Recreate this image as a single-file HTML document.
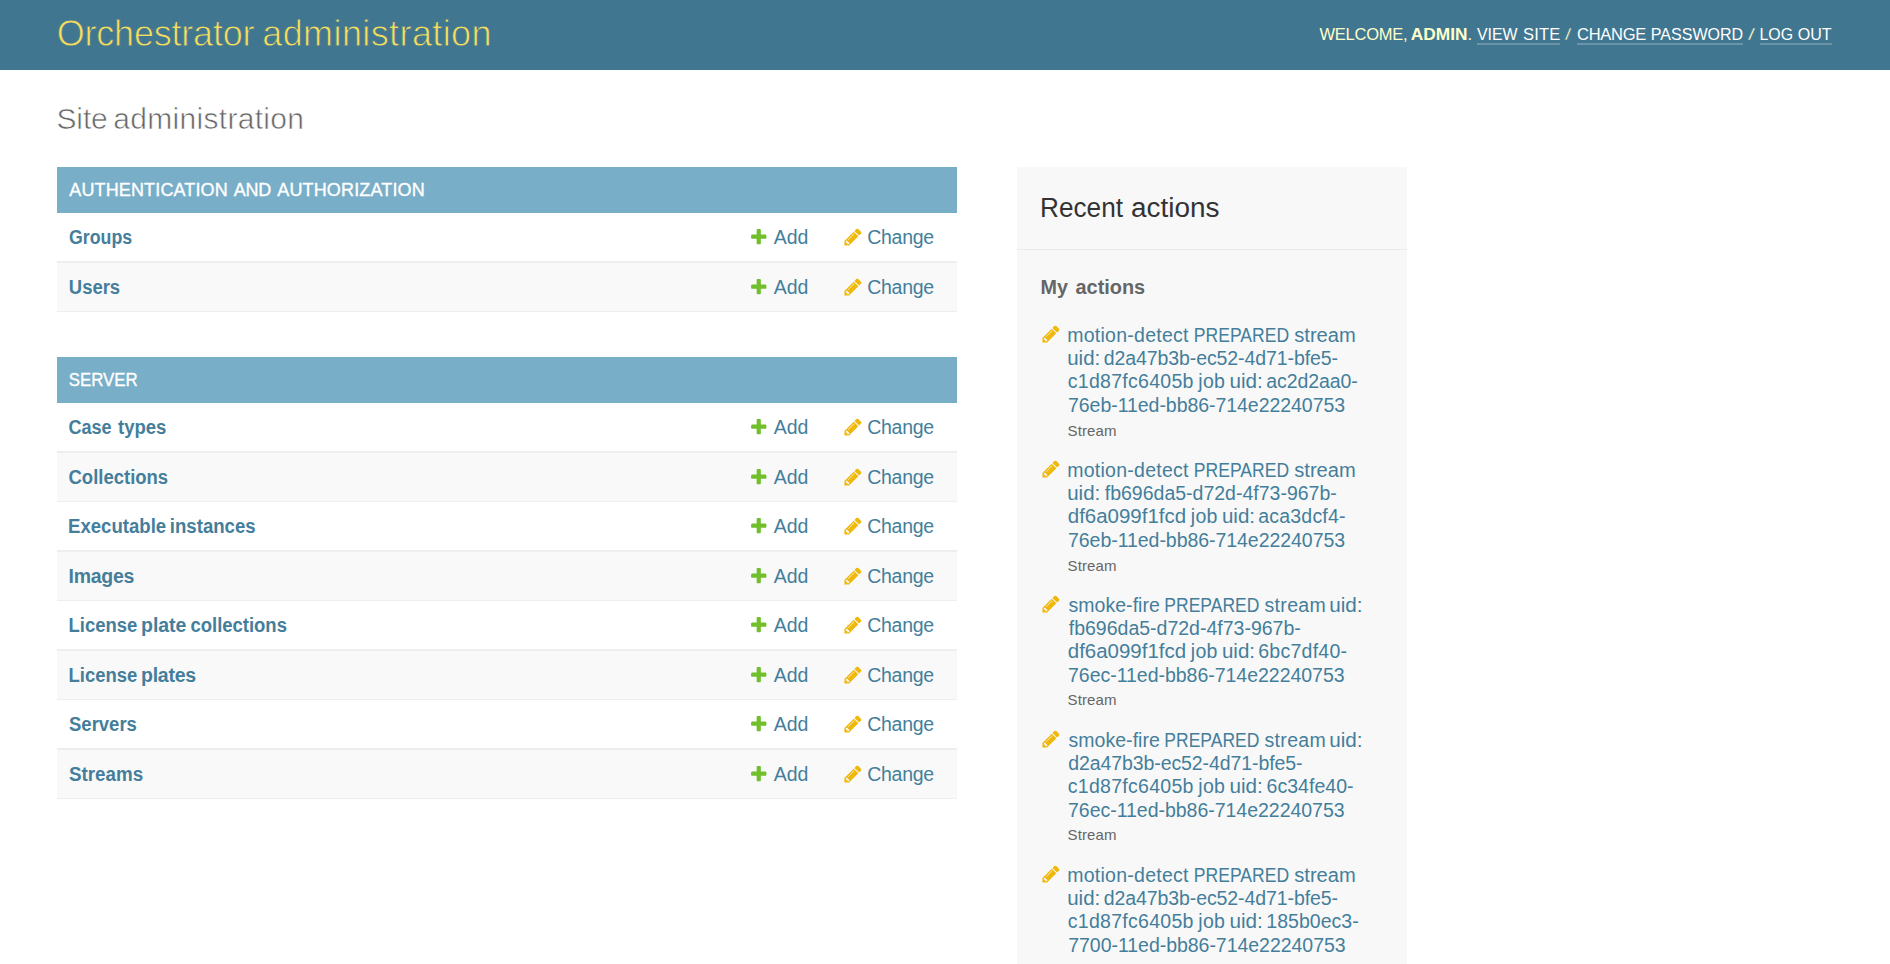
<!DOCTYPE html>
<html lang="en"><head><meta charset="utf-8"><title>Site administration | Orchestrator administration</title>
<style>
html,body{margin:0;padding:0;background:#fff;}
body{width:1890px;height:964px;overflow:hidden;position:relative;font-family:"Liberation Sans",sans-serif;}
h1,h2,h3,ul,li{margin:0;padding:0;font-weight:normal;font-size:inherit;list-style:none;}
a{color:#447e9b;text-decoration:none;}
.t{position:absolute;white-space:nowrap;display:block;transform-origin:0 50%;}
.b{font-weight:bold;}
.f36{font-size:36px;line-height:43px;}
.f30{font-size:30px;line-height:36px;}
.f27{font-size:27px;line-height:32px;}
.f21{font-size:21px;line-height:25px;}
.f19{font-size:19.5px;line-height:23px;}
.f18{font-size:18px;line-height:22px;text-transform:uppercase;}
.f16{font-size:16.5px;line-height:20px;text-transform:uppercase;}
.f15{font-size:15px;line-height:18px;}
.q{color:#666;}
.sl{-webkit-text-stroke:0.4px #417690;}
#header{position:absolute;left:0;top:0;width:1890px;height:70px;background:#417690;color:#ffc;}
#branding h1{color:#f5dd5d;-webkit-text-stroke:0.8px #417690;}
#user-tools a{position:absolute;top:24px;height:19px;border-bottom:2px solid rgba(255,255,255,0.22);color:#fff;display:block;}
#content>h1{color:#666;-webkit-text-stroke:0.6px #fff;}
.module{position:absolute;left:57px;width:900px;}
.caption{position:absolute;left:0;top:0;width:900px;height:46px;background:#79aec8;color:#fff;-webkit-text-stroke:0.35px #fff;}
.row{position:absolute;left:0;width:900px;height:49.5px;}
.row.r2{background:#f9f9f9;}
.row .bd{position:absolute;left:0;bottom:0;width:900px;height:1.5px;background:#eee;}
.ic{position:absolute;width:19.5px;height:19.5px;display:block;}
.pn{width:20px;height:20px;}
#side{position:absolute;left:1017px;top:167px;width:390px;height:797px;background:#f8f8f8;}
#side h2{color:#333;}
#side h3{color:#666;}
#side .hr{position:absolute;left:0;top:82px;width:390px;height:1px;background:#eaeaea;}
</style></head>
<body class="dashboard">
<div id="header">
<div id="branding"><h1><span class="t f36" style="left:56.75px;top:12px;letter-spacing:-0.209px;">Orchestrator</span> <span class="t f36" style="left:262.25px;top:12px;letter-spacing:0.399px;">administration</span></h1></div>
<div id="user-tools">
<span class="t f16" style="left:1319.50px;top:24px;letter-spacing:-0.249px;">Welcome,</span> <strong><span class="t f16 b" style="left:1410px;top:24px;transform:translateX(0.75px) scaleX(1.0488);">admin</span></strong><span class="t f16" style="left:1467.60px;top:24px;">.</span>
<a style="left:1476.5px;width:83.8px"><span class="t f16" style="left:-1px;top:0px;transform:translateX(1.00px) scaleX(0.9629);">View</span> <span class="t f16" style="left:46.50px;top:0px;letter-spacing:0.216px;">site</span></a> <span class="t f16 sl" style="left:1564px;top:24px;transform:translateX(0.75px) scaleX(1.4542);">/</span> <a style="left:1577px;width:166px"><span class="t f16" style="left:-0.00px;top:0px;letter-spacing:-0.261px;">Change</span> <span class="t f16" style="left:73px;top:0px;transform:translateX(0.78px) scaleX(0.9723);">password</span></a> <span class="t f16 sl" style="left:1747px;top:24px;transform:translateX(0.75px) scaleX(1.6265);">/</span> <a style="left:1760px;width:72px"><span class="t f16" style="left:-1px;top:0px;transform:translateX(0.54px) scaleX(0.9623);">Log</span> <span class="t f16" style="left:37px;top:0px;transform:translateX(0.75px) scaleX(0.9722);">out</span></a>
</div></div>
<div id="content">
<h1><span class="t f30" style="left:56.50px;top:101px;letter-spacing:-0.148px;">Site</span> <span class="t f30" style="left:113.25px;top:101px;letter-spacing:0.303px;">administration</span></h1>
<div id="content-main">
<div class="module" style="top:167px;height:145px">
<h2 class="caption"><span class="t f18" style="left:12.25px;top:12px;letter-spacing:0.141px;">Authentication</span> <span class="t f18" style="left:176.75px;top:12px;letter-spacing:-0.250px;">and</span> <span class="t f18" style="left:220.25px;top:12px;letter-spacing:0.153px;">Authorization</span></h2>
<div class="row" style="top:46px">
<a><span class="t f19 b" style="left:11px;top:13px;transform:translateX(1.00px) scaleX(0.9107);">Groups</span></a>
<svg class="ic" style="left:692px;top:14.25px" viewBox="0 0 1792 1792"><path fill="#70bf2b" d="M1600 796v192q0 40-28 68t-68 28h-416v416q0 40-28 68t-68 28h-192q-40 0-68-28t-28-68v-416h-416q-40 0-68-28t-28-68v-192q0-40 28-68t68-28h416v-416q0-40 28-68t68-28h192q40 0 68 28t28 68v416h416q40 0 68 28t28 68z"/></svg><a><span class="t f19" style="left:716.75px;top:13px;letter-spacing:-0.045px;">Add</span></a>
<svg class="ic pn" style="left:785.55px;top:14.2px" viewBox="0 0 1792 1792"><path fill="#efb80b" d="M491 1536l91-91-235-235-91 91v107h128v128h107zm523-928q0-22-22-22-10 0-17 7l-542 542q-7 7-7 17 0 22 22 22 10 0 17-7l542-542q7-7 7-17zm-54-192l416 416-832 832h-416v-416zm683 96q0 53-37 90l-166 166-416-416 166-165q36-38 90-38 53 0 91 38l235 234q37 39 37 91z"/></svg><a><span class="t f19" style="left:810.25px;top:13px;letter-spacing:-0.289px;">Change</span></a>
<div class="bd"></div></div>
<div class="row r2" style="top:95.5px">
<a><span class="t f19 b" style="left:11px;top:13.5px;transform:translateX(0.80px) scaleX(0.9469);">Users</span></a>
<svg class="ic" style="left:692px;top:14.25px" viewBox="0 0 1792 1792"><path fill="#70bf2b" d="M1600 796v192q0 40-28 68t-68 28h-416v416q0 40-28 68t-68 28h-192q-40 0-68-28t-28-68v-416h-416q-40 0-68-28t-28-68v-192q0-40 28-68t68-28h416v-416q0-40 28-68t68-28h192q40 0 68 28t28 68v416h416q40 0 68 28t28 68z"/></svg><a><span class="t f19" style="left:716.75px;top:13.5px;letter-spacing:-0.045px;">Add</span></a>
<svg class="ic pn" style="left:785.55px;top:14.2px" viewBox="0 0 1792 1792"><path fill="#efb80b" d="M491 1536l91-91-235-235-91 91v107h128v128h107zm523-928q0-22-22-22-10 0-17 7l-542 542q-7 7-7 17 0 22 22 22 10 0 17-7l542-542q7-7 7-17zm-54-192l416 416-832 832h-416v-416zm683 96q0 53-37 90l-166 166-416-416 166-165q36-38 90-38 53 0 91 38l235 234q37 39 37 91z"/></svg><a><span class="t f19" style="left:810.25px;top:13.5px;letter-spacing:-0.289px;">Change</span></a>
<div class="bd"></div></div>
</div>
<div class="module" style="top:357px;height:442px">
<h2 class="caption"><span class="t f18" style="left:11px;top:12px;transform:translateX(0.75px) scaleX(0.9365);">Server</span></h2>
<div class="row" style="top:46px">
<a><span class="t f19 b" style="left:11px;top:13px;transform:translateX(0.50px) scaleX(0.9259);">Case</span> <span class="t f19 b" style="left:61px;top:13px;transform:translateX(0.00px) scaleX(0.9498);">types</span></a>
<svg class="ic" style="left:692px;top:14.25px" viewBox="0 0 1792 1792"><path fill="#70bf2b" d="M1600 796v192q0 40-28 68t-68 28h-416v416q0 40-28 68t-68 28h-192q-40 0-68-28t-28-68v-416h-416q-40 0-68-28t-28-68v-192q0-40 28-68t68-28h416v-416q0-40 28-68t68-28h192q40 0 68 28t28 68v416h416q40 0 68 28t28 68z"/></svg><a><span class="t f19" style="left:716.75px;top:13px;letter-spacing:-0.045px;">Add</span></a>
<svg class="ic pn" style="left:785.55px;top:14.2px" viewBox="0 0 1792 1792"><path fill="#efb80b" d="M491 1536l91-91-235-235-91 91v107h128v128h107zm523-928q0-22-22-22-10 0-17 7l-542 542q-7 7-7 17 0 22 22 22 10 0 17-7l542-542q7-7 7-17zm-54-192l416 416-832 832h-416v-416zm683 96q0 53-37 90l-166 166-416-416 166-165q36-38 90-38 53 0 91 38l235 234q37 39 37 91z"/></svg><a><span class="t f19" style="left:810.25px;top:13px;letter-spacing:-0.289px;">Change</span></a>
<div class="bd"></div></div>
<div class="row r2" style="top:95.5px">
<a><span class="t f19 b" style="left:11px;top:13.5px;transform:translateX(0.50px) scaleX(0.9480);">Collections</span></a>
<svg class="ic" style="left:692px;top:14.25px" viewBox="0 0 1792 1792"><path fill="#70bf2b" d="M1600 796v192q0 40-28 68t-68 28h-416v416q0 40-28 68t-68 28h-192q-40 0-68-28t-28-68v-416h-416q-40 0-68-28t-28-68v-192q0-40 28-68t68-28h416v-416q0-40 28-68t68-28h192q40 0 68 28t28 68v416h416q40 0 68 28t28 68z"/></svg><a><span class="t f19" style="left:716.75px;top:13.5px;letter-spacing:-0.045px;">Add</span></a>
<svg class="ic pn" style="left:785.55px;top:14.2px" viewBox="0 0 1792 1792"><path fill="#efb80b" d="M491 1536l91-91-235-235-91 91v107h128v128h107zm523-928q0-22-22-22-10 0-17 7l-542 542q-7 7-7 17 0 22 22 22 10 0 17-7l542-542q7-7 7-17zm-54-192l416 416-832 832h-416v-416zm683 96q0 53-37 90l-166 166-416-416 166-165q36-38 90-38 53 0 91 38l235 234q37 39 37 91z"/></svg><a><span class="t f19" style="left:810.25px;top:13.5px;letter-spacing:-0.289px;">Change</span></a>
<div class="bd"></div></div>
<div class="row" style="top:145px">
<a><span class="t f19 b" style="left:11px;top:13px;transform:translateX(0.05px) scaleX(0.9524);">Executable</span> <span class="t f19 b" style="left:112px;top:13px;transform:translateX(0.80px) scaleX(0.9541);">instances</span></a>
<svg class="ic" style="left:692px;top:14.25px" viewBox="0 0 1792 1792"><path fill="#70bf2b" d="M1600 796v192q0 40-28 68t-68 28h-416v416q0 40-28 68t-68 28h-192q-40 0-68-28t-28-68v-416h-416q-40 0-68-28t-28-68v-192q0-40 28-68t68-28h416v-416q0-40 28-68t68-28h192q40 0 68 28t28 68v416h416q40 0 68 28t28 68z"/></svg><a><span class="t f19" style="left:716.75px;top:13px;letter-spacing:-0.045px;">Add</span></a>
<svg class="ic pn" style="left:785.55px;top:14.2px" viewBox="0 0 1792 1792"><path fill="#efb80b" d="M491 1536l91-91-235-235-91 91v107h128v128h107zm523-928q0-22-22-22-10 0-17 7l-542 542q-7 7-7 17 0 22 22 22 10 0 17-7l542-542q7-7 7-17zm-54-192l416 416-832 832h-416v-416zm683 96q0 53-37 90l-166 166-416-416 166-165q36-38 90-38 53 0 91 38l235 234q37 39 37 91z"/></svg><a><span class="t f19" style="left:810.25px;top:13px;letter-spacing:-0.289px;">Change</span></a>
<div class="bd"></div></div>
<div class="row r2" style="top:194.5px">
<a><span class="t f19 b" style="left:11.50px;top:13.5px;letter-spacing:-0.266px;">Images</span></a>
<svg class="ic" style="left:692px;top:14.25px" viewBox="0 0 1792 1792"><path fill="#70bf2b" d="M1600 796v192q0 40-28 68t-68 28h-416v416q0 40-28 68t-68 28h-192q-40 0-68-28t-28-68v-416h-416q-40 0-68-28t-28-68v-192q0-40 28-68t68-28h416v-416q0-40 28-68t68-28h192q40 0 68 28t28 68v416h416q40 0 68 28t28 68z"/></svg><a><span class="t f19" style="left:716.75px;top:13.5px;letter-spacing:-0.045px;">Add</span></a>
<svg class="ic pn" style="left:785.55px;top:14.2px" viewBox="0 0 1792 1792"><path fill="#efb80b" d="M491 1536l91-91-235-235-91 91v107h128v128h107zm523-928q0-22-22-22-10 0-17 7l-542 542q-7 7-7 17 0 22 22 22 10 0 17-7l542-542q7-7 7-17zm-54-192l416 416-832 832h-416v-416zm683 96q0 53-37 90l-166 166-416-416 166-165q36-38 90-38 53 0 91 38l235 234q37 39 37 91z"/></svg><a><span class="t f19" style="left:810.25px;top:13.5px;letter-spacing:-0.289px;">Change</span></a>
<div class="bd"></div></div>
<div class="row" style="top:244px">
<a><span class="t f19 b" style="left:11px;top:13px;transform:translateX(0.55px) scaleX(0.9476);">License</span> <span class="t f19 b" style="left:84.00px;top:13px;letter-spacing:-0.035px;">plate</span> <span class="t f19 b" style="left:133px;top:13px;transform:translateX(0.50px) scaleX(0.9463);">collections</span></a>
<svg class="ic" style="left:692px;top:14.25px" viewBox="0 0 1792 1792"><path fill="#70bf2b" d="M1600 796v192q0 40-28 68t-68 28h-416v416q0 40-28 68t-68 28h-192q-40 0-68-28t-28-68v-416h-416q-40 0-68-28t-28-68v-192q0-40 28-68t68-28h416v-416q0-40 28-68t68-28h192q40 0 68 28t28 68v416h416q40 0 68 28t28 68z"/></svg><a><span class="t f19" style="left:716.75px;top:13px;letter-spacing:-0.045px;">Add</span></a>
<svg class="ic pn" style="left:785.55px;top:14.2px" viewBox="0 0 1792 1792"><path fill="#efb80b" d="M491 1536l91-91-235-235-91 91v107h128v128h107zm523-928q0-22-22-22-10 0-17 7l-542 542q-7 7-7 17 0 22 22 22 10 0 17-7l542-542q7-7 7-17zm-54-192l416 416-832 832h-416v-416zm683 96q0 53-37 90l-166 166-416-416 166-165q36-38 90-38 53 0 91 38l235 234q37 39 37 91z"/></svg><a><span class="t f19" style="left:810.25px;top:13px;letter-spacing:-0.289px;">Change</span></a>
<div class="bd"></div></div>
<div class="row r2" style="top:293.5px">
<a><span class="t f19 b" style="left:11px;top:13.5px;transform:translateX(0.55px) scaleX(0.9476);">License</span> <span class="t f19 b" style="left:84.00px;top:13.5px;letter-spacing:-0.247px;">plates</span></a>
<svg class="ic" style="left:692px;top:14.25px" viewBox="0 0 1792 1792"><path fill="#70bf2b" d="M1600 796v192q0 40-28 68t-68 28h-416v416q0 40-28 68t-68 28h-192q-40 0-68-28t-28-68v-416h-416q-40 0-68-28t-28-68v-192q0-40 28-68t68-28h416v-416q0-40 28-68t68-28h192q40 0 68 28t28 68v416h416q40 0 68 28t28 68z"/></svg><a><span class="t f19" style="left:716.75px;top:13.5px;letter-spacing:-0.045px;">Add</span></a>
<svg class="ic pn" style="left:785.55px;top:14.2px" viewBox="0 0 1792 1792"><path fill="#efb80b" d="M491 1536l91-91-235-235-91 91v107h128v128h107zm523-928q0-22-22-22-10 0-17 7l-542 542q-7 7-7 17 0 22 22 22 10 0 17-7l542-542q7-7 7-17zm-54-192l416 416-832 832h-416v-416zm683 96q0 53-37 90l-166 166-416-416 166-165q36-38 90-38 53 0 91 38l235 234q37 39 37 91z"/></svg><a><span class="t f19" style="left:810.25px;top:13.5px;letter-spacing:-0.289px;">Change</span></a>
<div class="bd"></div></div>
<div class="row" style="top:343px">
<a><span class="t f19 b" style="left:12px;top:13px;transform:translateX(0.00px) scaleX(0.9486);">Servers</span></a>
<svg class="ic" style="left:692px;top:14.25px" viewBox="0 0 1792 1792"><path fill="#70bf2b" d="M1600 796v192q0 40-28 68t-68 28h-416v416q0 40-28 68t-68 28h-192q-40 0-68-28t-28-68v-416h-416q-40 0-68-28t-28-68v-192q0-40 28-68t68-28h416v-416q0-40 28-68t68-28h192q40 0 68 28t28 68v416h416q40 0 68 28t28 68z"/></svg><a><span class="t f19" style="left:716.75px;top:13px;letter-spacing:-0.045px;">Add</span></a>
<svg class="ic pn" style="left:785.55px;top:14.2px" viewBox="0 0 1792 1792"><path fill="#efb80b" d="M491 1536l91-91-235-235-91 91v107h128v128h107zm523-928q0-22-22-22-10 0-17 7l-542 542q-7 7-7 17 0 22 22 22 10 0 17-7l542-542q7-7 7-17zm-54-192l416 416-832 832h-416v-416zm683 96q0 53-37 90l-166 166-416-416 166-165q36-38 90-38 53 0 91 38l235 234q37 39 37 91z"/></svg><a><span class="t f19" style="left:810.25px;top:13px;letter-spacing:-0.289px;">Change</span></a>
<div class="bd"></div></div>
<div class="row r2" style="top:392.5px">
<a><span class="t f19 b" style="left:12px;top:13.5px;transform:translateX(0.00px) scaleX(0.9632);">Streams</span></a>
<svg class="ic" style="left:692px;top:14.25px" viewBox="0 0 1792 1792"><path fill="#70bf2b" d="M1600 796v192q0 40-28 68t-68 28h-416v416q0 40-28 68t-68 28h-192q-40 0-68-28t-28-68v-416h-416q-40 0-68-28t-28-68v-192q0-40 28-68t68-28h416v-416q0-40 28-68t68-28h192q40 0 68 28t28 68v416h416q40 0 68 28t28 68z"/></svg><a><span class="t f19" style="left:716.75px;top:13.5px;letter-spacing:-0.045px;">Add</span></a>
<svg class="ic pn" style="left:785.55px;top:14.2px" viewBox="0 0 1792 1792"><path fill="#efb80b" d="M491 1536l91-91-235-235-91 91v107h128v128h107zm523-928q0-22-22-22-10 0-17 7l-542 542q-7 7-7 17 0 22 22 22 10 0 17-7l542-542q7-7 7-17zm-54-192l416 416-832 832h-416v-416zm683 96q0 53-37 90l-166 166-416-416 166-165q36-38 90-38 53 0 91 38l235 234q37 39 37 91z"/></svg><a><span class="t f19" style="left:810.25px;top:13.5px;letter-spacing:-0.289px;">Change</span></a>
<div class="bd"></div></div>
</div>
</div>
<div id="side">
<h2><span class="t f27" style="left:23px;top:25px;transform:translateX(0.06px) scaleX(0.9698);">Recent</span> <span class="t f27" style="left:113px;top:25px;transform:translateX(0.96px) scaleX(1.0352);">actions</span></h2>
<div class="hr"></div>
<h3><span class="t f21 b" style="left:23px;top:107px;transform:translateX(0.56px) scaleX(0.9400);">My</span> <span class="t f21 b" style="left:58px;top:107px;transform:translateX(0.50px) scaleX(0.9473);">actions</span></h3>
<ul>
<li>
<svg class="ic pn" style="left:23.6px;top:157.05px" viewBox="0 0 1792 1792"><path fill="#efb80b" d="M491 1536l91-91-235-235-91 91v107h128v128h107zm523-928q0-22-22-22-10 0-17 7l-542 542q-7 7-7 17 0 22 22 22 10 0 17-7l542-542q7-7 7-17zm-54-192l416 416-832 832h-416v-416zm683 96q0 53-37 90l-166 166-416-416 166-165q36-38 90-38 53 0 91 38l235 234q37 39 37 91z"/></svg>
<a><span class="t f19" style="left:50.25px;top:157px;letter-spacing:0.253px;">motion-detect</span> <span class="t f19" style="left:176px;top:157px;transform:translateX(0.85px) scaleX(0.8999);">PREPARED</span> <span class="t f19" style="left:277px;top:157px;transform:translateX(0.25px) scaleX(1.0327);">stream</span>
<span class="t f19" style="left:50px;top:180px;transform:translateX(0.20px) scaleX(1.0512);">uid:</span> <span class="t f19" style="left:86.75px;top:180px;letter-spacing:-0.091px;">d2a47b3b-ec52-4d71-bfe5-</span>
<span class="t f19" style="left:50.75px;top:203px;letter-spacing:0.282px;">c1d87fc6405b</span> <span class="t f19" style="left:181.25px;top:203px;letter-spacing:0.332px;">job</span> <span class="t f19" style="left:212px;top:203px;transform:translateX(0.44px) scaleX(1.0603);">uid:</span> <span class="t f19" style="left:249.25px;top:203px;letter-spacing:-0.081px;">ac2d2aa0-</span>
<span class="t f19" style="left:51.00px;top:227px;letter-spacing:-0.047px;">76eb-11ed-bb86-714e22240753</span></a>
<span class="t f15 q" style="left:50.50px;top:255px;letter-spacing:0.135px;">Stream</span>
</li>
<li>
<svg class="ic pn" style="left:23.6px;top:292.05px" viewBox="0 0 1792 1792"><path fill="#efb80b" d="M491 1536l91-91-235-235-91 91v107h128v128h107zm523-928q0-22-22-22-10 0-17 7l-542 542q-7 7-7 17 0 22 22 22 10 0 17-7l542-542q7-7 7-17zm-54-192l416 416-832 832h-416v-416zm683 96q0 53-37 90l-166 166-416-416 166-165q36-38 90-38 53 0 91 38l235 234q37 39 37 91z"/></svg>
<a><span class="t f19" style="left:50.25px;top:292px;letter-spacing:0.253px;">motion-detect</span> <span class="t f19" style="left:176px;top:292px;transform:translateX(0.85px) scaleX(0.8999);">PREPARED</span> <span class="t f19" style="left:277px;top:292px;transform:translateX(0.25px) scaleX(1.0327);">stream</span>
<span class="t f19" style="left:50px;top:315px;transform:translateX(0.20px) scaleX(1.0512);">uid:</span> <span class="t f19" style="left:87.75px;top:315px;letter-spacing:-0.001px;">fb696da5-d72d-4f73-967b-</span>
<span class="t f19" style="left:50px;top:338px;transform:translateX(0.75px) scaleX(1.0500);">df6a099f1fcd</span> <span class="t f19" style="left:173.75px;top:338px;letter-spacing:0.332px;">job</span> <span class="t f19" style="left:204px;top:338px;transform:translateX(0.95px) scaleX(1.0514);">uid:</span> <span class="t f19" style="left:241.25px;top:338px;letter-spacing:0.203px;">aca3dcf4-</span>
<span class="t f19" style="left:51.00px;top:362px;letter-spacing:-0.047px;">76eb-11ed-bb86-714e22240753</span></a>
<span class="t f15 q" style="left:50.50px;top:390px;letter-spacing:0.135px;">Stream</span>
</li>
<li>
<svg class="ic pn" style="left:23.6px;top:427.05px" viewBox="0 0 1792 1792"><path fill="#efb80b" d="M491 1536l91-91-235-235-91 91v107h128v128h107zm523-928q0-22-22-22-10 0-17 7l-542 542q-7 7-7 17 0 22 22 22 10 0 17-7l542-542q7-7 7-17zm-54-192l416 416-832 832h-416v-416zm683 96q0 53-37 90l-166 166-416-416 166-165q36-38 90-38 53 0 91 38l235 234q37 39 37 91z"/></svg>
<a><span class="t f19" style="left:51.50px;top:427px;letter-spacing:0.037px;">smoke-fire</span> <span class="t f19" style="left:147px;top:427px;transform:translateX(0.35px) scaleX(0.8975);">PREPARED</span> <span class="t f19" style="left:247.50px;top:427px;letter-spacing:0.331px;">stream</span> <span class="t f19" style="left:312px;top:427px;transform:translateX(0.19px) scaleX(1.0603);">uid:</span>
<span class="t f19" style="left:51.75px;top:450px;letter-spacing:-0.001px;">fb696da5-d72d-4f73-967b-</span>
<span class="t f19" style="left:50px;top:473px;transform:translateX(0.75px) scaleX(1.0500);">df6a099f1fcd</span> <span class="t f19" style="left:173.75px;top:473px;letter-spacing:0.332px;">job</span> <span class="t f19" style="left:204px;top:473px;transform:translateX(0.95px) scaleX(1.0514);">uid:</span> <span class="t f19" style="left:241.25px;top:473px;letter-spacing:0.254px;">6bc7df40-</span>
<span class="t f19" style="left:51.00px;top:497px;letter-spacing:-0.024px;">76ec-11ed-bb86-714e22240753</span></a>
<span class="t f15 q" style="left:50.50px;top:524px;letter-spacing:0.135px;">Stream</span>
</li>
<li>
<svg class="ic pn" style="left:23.6px;top:562.05px" viewBox="0 0 1792 1792"><path fill="#efb80b" d="M491 1536l91-91-235-235-91 91v107h128v128h107zm523-928q0-22-22-22-10 0-17 7l-542 542q-7 7-7 17 0 22 22 22 10 0 17-7l542-542q7-7 7-17zm-54-192l416 416-832 832h-416v-416zm683 96q0 53-37 90l-166 166-416-416 166-165q36-38 90-38 53 0 91 38l235 234q37 39 37 91z"/></svg>
<a><span class="t f19" style="left:51.50px;top:562px;letter-spacing:0.037px;">smoke-fire</span> <span class="t f19" style="left:147px;top:562px;transform:translateX(0.35px) scaleX(0.8975);">PREPARED</span> <span class="t f19" style="left:247.50px;top:562px;letter-spacing:0.331px;">stream</span> <span class="t f19" style="left:312px;top:562px;transform:translateX(0.19px) scaleX(1.0603);">uid:</span>
<span class="t f19" style="left:51.25px;top:585px;letter-spacing:-0.091px;">d2a47b3b-ec52-4d71-bfe5-</span>
<span class="t f19" style="left:50.75px;top:608px;letter-spacing:0.282px;">c1d87fc6405b</span> <span class="t f19" style="left:181.25px;top:608px;letter-spacing:0.332px;">job</span> <span class="t f19" style="left:212px;top:608px;transform:translateX(0.44px) scaleX(1.0603);">uid:</span> <span class="t f19" style="left:249.50px;top:608px;letter-spacing:0.035px;">6c34fe40-</span>
<span class="t f19" style="left:51.00px;top:632px;letter-spacing:-0.024px;">76ec-11ed-bb86-714e22240753</span></a>
<span class="t f15 q" style="left:50.50px;top:659px;letter-spacing:0.135px;">Stream</span>
</li>
<li>
<svg class="ic pn" style="left:23.6px;top:697.05px" viewBox="0 0 1792 1792"><path fill="#efb80b" d="M491 1536l91-91-235-235-91 91v107h128v128h107zm523-928q0-22-22-22-10 0-17 7l-542 542q-7 7-7 17 0 22 22 22 10 0 17-7l542-542q7-7 7-17zm-54-192l416 416-832 832h-416v-416zm683 96q0 53-37 90l-166 166-416-416 166-165q36-38 90-38 53 0 91 38l235 234q37 39 37 91z"/></svg>
<a><span class="t f19" style="left:50.25px;top:697px;letter-spacing:0.253px;">motion-detect</span> <span class="t f19" style="left:176px;top:697px;transform:translateX(0.85px) scaleX(0.8999);">PREPARED</span> <span class="t f19" style="left:277px;top:697px;transform:translateX(0.25px) scaleX(1.0327);">stream</span>
<span class="t f19" style="left:50px;top:720px;transform:translateX(0.20px) scaleX(1.0512);">uid:</span> <span class="t f19" style="left:86.75px;top:720px;letter-spacing:-0.091px;">d2a47b3b-ec52-4d71-bfe5-</span>
<span class="t f19" style="left:50.75px;top:743px;letter-spacing:0.282px;">c1d87fc6405b</span> <span class="t f19" style="left:181.25px;top:743px;letter-spacing:0.332px;">job</span> <span class="t f19" style="left:212px;top:743px;transform:translateX(0.44px) scaleX(1.0603);">uid:</span> <span class="t f19" style="left:249.25px;top:743px;letter-spacing:0.043px;">185b0ec3-</span>
<span class="t f19" style="left:51.25px;top:767px;letter-spacing:-0.037px;">7700-11ed-bb86-714e22240753</span></a>
</li>
</ul></div></div>
</body></html>
